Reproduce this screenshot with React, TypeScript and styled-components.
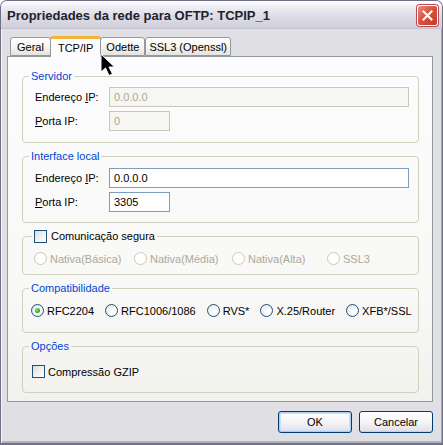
import React from "react";
import styled, { createGlobalStyle } from "styled-components";

const GlobalStyle = createGlobalStyle`
  html, body { margin: 0; padding: 0; background: #ffffff; }
  body { font-family: "Liberation Sans", Arial, sans-serif; font-size: 11px; color: #000; }
  * { box-sizing: border-box; }
`;

const Window = styled.div`
  position: relative;
  width: 443px;
  height: 445px;
  display: flex;
  flex-direction: column;
  background: #e0dfe3;
  border: 1px solid #6f6f86;
  border-bottom-width: 2px;
  border-radius: 7px 7px 0 0;
  box-shadow: inset 1px 0 0 #f4f4f8, inset -1px 0 0 #a6a5b4, inset 0 -2px 0 #b3b2c0;
  overflow: hidden;
`;

const TitleBar = styled.div`
  height: 28px;
  flex: none;
  display: flex;
  align-items: center;
  justify-content: space-between;
  padding: 0 4px 0 6px;
  background: linear-gradient(#ffffff 0%, #ecebf2 25%, #dcdbe5 60%, #cfcfdb 100%);
  border-bottom: 1px solid #c4c3d0;
`;

const Title = styled.span`
  font-family: "Liberation Sans", Arial, sans-serif;
  font-weight: bold;
  font-size: 13px;
  color: #22222c;
  padding-top: 1px;
`;

const CloseButton = styled.div`
  width: 21px;
  height: 21px;
  border-radius: 3px;
  border: 1px solid #ffffff;
  background: linear-gradient(135deg, #ea8d7e 0%, #d7553f 45%, #c13b27 100%);
  box-shadow: 0 0 0 1px #b5495a;
  display: flex;
  align-items: center;
  justify-content: center;
  margin-top: 2px;
`;

const Body = styled.div`
  flex: 1;
  display: flex;
  flex-direction: column;
  padding: 7px 9px 0 6px;
`;

const TabStrip = styled.div`
  display: flex;
  align-items: flex-end;
  height: 20px;
  padding-left: 3px;
  position: relative;
  z-index: 1;
`;

const Tab = styled.div<{ $active?: boolean; $px?: number }>`
  height: ${(p) => (p.$active ? "21px" : "19px")};
  margin: ${(p) => (p.$active ? "0 -1px -1px -1px" : "0")};
  padding: 0 ${(p) => p.$px ?? 6}px;
  display: flex;
  align-items: center;
  border: 1px solid #919b9c;
  border-bottom: ${(p) => (p.$active ? "none" : "1px solid #919b9c")};
  border-top: ${(p) => (p.$active ? "3px solid #f4b43c" : "1px solid #919b9c")};
  border-radius: 3px 3px 0 0;
  background: ${(p) =>
    p.$active ? "#fcfcfe" : "linear-gradient(#ffffff, #f3f2ef 60%, #e4e3df)"};
  color: #000;
  position: relative;
  z-index: ${(p) => (p.$active ? 2 : 1)};
`;

const Panel = styled.div`
  height: 346px;
  border: 1px solid #919b9c;
  background: linear-gradient(#fcfcfe 0%, #f8f8f6 70%, #f2f1ee 100%);
  padding: 13px 0 0 14px;
  display: flex;
  flex-direction: column;
  gap: 7px;
`;

const Group = styled.fieldset<{ $pt: number; $pb: number; $pl: number }>`
  margin: 0;
  width: 397px;
  border: 1px solid #d0d0bf;
  border-radius: 4px;
  padding: ${(p) => `${p.$pt}px 8px ${p.$pb}px ${p.$pl}px`};
  min-width: 0;
`;

const Legend = styled.legend<{ $ml: number }>`
  margin-left: ${(p) => p.$ml}px;
  padding: 0 2px;
  height: 13px;
  line-height: 13px;
  color: #0046d5;
  display: flex;
  align-items: center;
  gap: 4px;
`;

const CheckLegend = styled(Legend)`
  color: #000;
`;

const FieldRow = styled.div`
  display: flex;
  align-items: center;
  height: 20px;
  & + & { margin-top: 4px; }
`;

const FieldLabel = styled.span`
  width: 74px;
  flex: none;
`;

const TextBox = styled.div<{ $w: number; $disabled?: boolean }>`
  width: ${(p) => p.$w}px;
  height: 20px;
  border: 1px solid ${(p) => (p.$disabled ? "#c9c7ba" : "#7f9db9")};
  background: ${(p) => (p.$disabled ? "#f6f6f3" : "#ffffff")};
  color: ${(p) => (p.$disabled ? "#aca899" : "#000")};
  padding: 0 4px;
  display: flex;
  align-items: center;
`;

const OptionRow = styled.div<{ $gap: number }>`
  display: flex;
  align-items: center;
  gap: ${(p) => p.$gap}px;
  height: 13px;
`;

const Option = styled.label<{ $w?: number; $disabled?: boolean }>`
  display: flex;
  align-items: center;
  gap: 3px;
  width: ${(p) => (p.$w ? `${p.$w}px` : "auto")};
  flex: none;
  color: ${(p) => (p.$disabled ? "#aca899" : "#000")};
  white-space: nowrap;
`;

const RadioCircle = styled.span<{ $disabled?: boolean; $checked?: boolean }>`
  width: 13px;
  height: 13px;
  border-radius: 50%;
  flex: none;
  border: 1px solid ${(p) => (p.$disabled ? "#cac8bb" : "#1c5180")};
  background: ${(p) =>
    p.$disabled ? "#ffffff" : "radial-gradient(circle at 65% 65%, #ffffff 20%, #e4e3dd 90%)"};
  display: flex;
  align-items: center;
  justify-content: center;
  &::after {
    content: "";
    display: ${(p) => (p.$checked ? "block" : "none")};
    width: 5px;
    height: 5px;
    border-radius: 50%;
    background: radial-gradient(circle at 40% 40%, #8ee58e 0%, #2fa82f 60%, #1f8a1f 100%);
  }
`;

const CheckSquare = styled.span`
  width: 13px;
  height: 13px;
  flex: none;
  border: 1px solid #1c5180;
  background: linear-gradient(135deg, #dcdcd7 0%, #f4f4f1 60%, #ffffff 100%);
`;

const ButtonRow = styled.div`
  display: flex;
  justify-content: flex-end;
  gap: 7px;
  margin-top: 9px;
`;

const Button = styled.div<{ $default?: boolean }>`
  width: 74px;
  height: 22px;
  border: 1px solid #003c74;
  border-radius: 3px;
  background: linear-gradient(#ffffff 0%, #f5f5f7 50%, #e4e3ea 90%, #d6d5df 100%);
  box-shadow: ${(p) =>
    p.$default ? "inset 0 0 0 1px #aecbf1, inset 0 0 0 2px #cfe0f7" : "inset 0 -1px 0 #d0cfd9"};
  display: flex;
  align-items: center;
  justify-content: center;
  color: #000;
`;

const Cursor = styled.svg`
  position: absolute;
  left: 99px;
  top: 52px;
  z-index: 5;
`;

export default function App() {
  return (
    <>
      <GlobalStyle />
      <Window>
        <TitleBar>
          <Title>Propriedades da rede para OFTP: TCPIP_1</Title>
          <CloseButton>
            <svg width="11" height="11" viewBox="0 0 11 11">
              <path d="M1.5 1.5 L9.5 9.5 M9.5 1.5 L1.5 9.5" stroke="#ffffff" strokeWidth="2" strokeLinecap="square" />
            </svg>
          </CloseButton>
        </TitleBar>
        <Body>
          <TabStrip>
            <Tab>Geral</Tab>
            <Tab $active $px={7}>TCP/IP</Tab>
            <Tab $px={5}>Odette</Tab>
            <Tab $px={3}>SSL3 (Openssl)</Tab>
          </TabStrip>
          <Panel>
            <Group $pt={4} $pb={11} $pl={12}>
              <Legend $ml={-6}>Servidor</Legend>
              <FieldRow>
                <FieldLabel>Endereço <u>I</u>P:</FieldLabel>
                <TextBox $w={300} $disabled>0.0.0.0</TextBox>
              </FieldRow>
              <FieldRow>
                <FieldLabel><u>P</u>orta IP:</FieldLabel>
                <TextBox $w={61} $disabled>0</TextBox>
              </FieldRow>
            </Group>
            <Group $pt={5} $pb={10} $pl={12}>
              <Legend $ml={-6}>Interface local</Legend>
              <FieldRow>
                <FieldLabel>Endereço <u>I</u>P:</FieldLabel>
                <TextBox $w={300}>0.0.0.0</TextBox>
              </FieldRow>
              <FieldRow>
                <FieldLabel><u>P</u>orta IP:</FieldLabel>
                <TextBox $w={61}>3305</TextBox>
              </FieldRow>
            </Group>
            <Group $pt={9} $pb={9} $pl={11}>
              <CheckLegend $ml={-2}>
                <CheckSquare />
                Comunicação segura
              </CheckLegend>
              <OptionRow $gap={0}>
                <Option $w={100} $disabled><RadioCircle $disabled />Nativa(Básica)</Option>
                <Option $w={98} $disabled><RadioCircle $disabled />Nativa(Média)</Option>
                <Option $w={95} $disabled><RadioCircle $disabled />Nativa(Alta)</Option>
                <Option $disabled><RadioCircle $disabled />SSL3</Option>
              </OptionRow>
            </Group>
            <Group $pt={9} $pb={15} $pl={8}>
              <Legend $ml={-2}>Compatibilidade</Legend>
              <OptionRow $gap={11}>
                <Option><RadioCircle $checked />RFC2204</Option>
                <Option><RadioCircle />RFC1006/1086</Option>
                <Option><RadioCircle />RVS*</Option>
                <Option><RadioCircle />X.25/Router</Option>
                <Option><RadioCircle />XFB*/SSL</Option>
              </OptionRow>
            </Group>
            <Group $pt={12} $pb={14} $pl={9}>
              <Legend $ml={-3}>Opções</Legend>
              <OptionRow $gap={0}>
                <Option><CheckSquare />Compressão GZIP</Option>
              </OptionRow>
            </Group>
          </Panel>
          <ButtonRow>
            <Button $default>OK</Button>
            <Button>Cancelar</Button>
          </ButtonRow>
        </Body>
        <Cursor width="17" height="25" viewBox="0 0 17 25">
          <path d="M1 1 L1 19 L5.5 15 L9 22.5 L12.5 21 L9 14 L14.5 14 Z" fill="#000" stroke="#ffffff" strokeWidth="1" strokeLinejoin="miter" />
        </Cursor>
      </Window>
    </>
  );
}
